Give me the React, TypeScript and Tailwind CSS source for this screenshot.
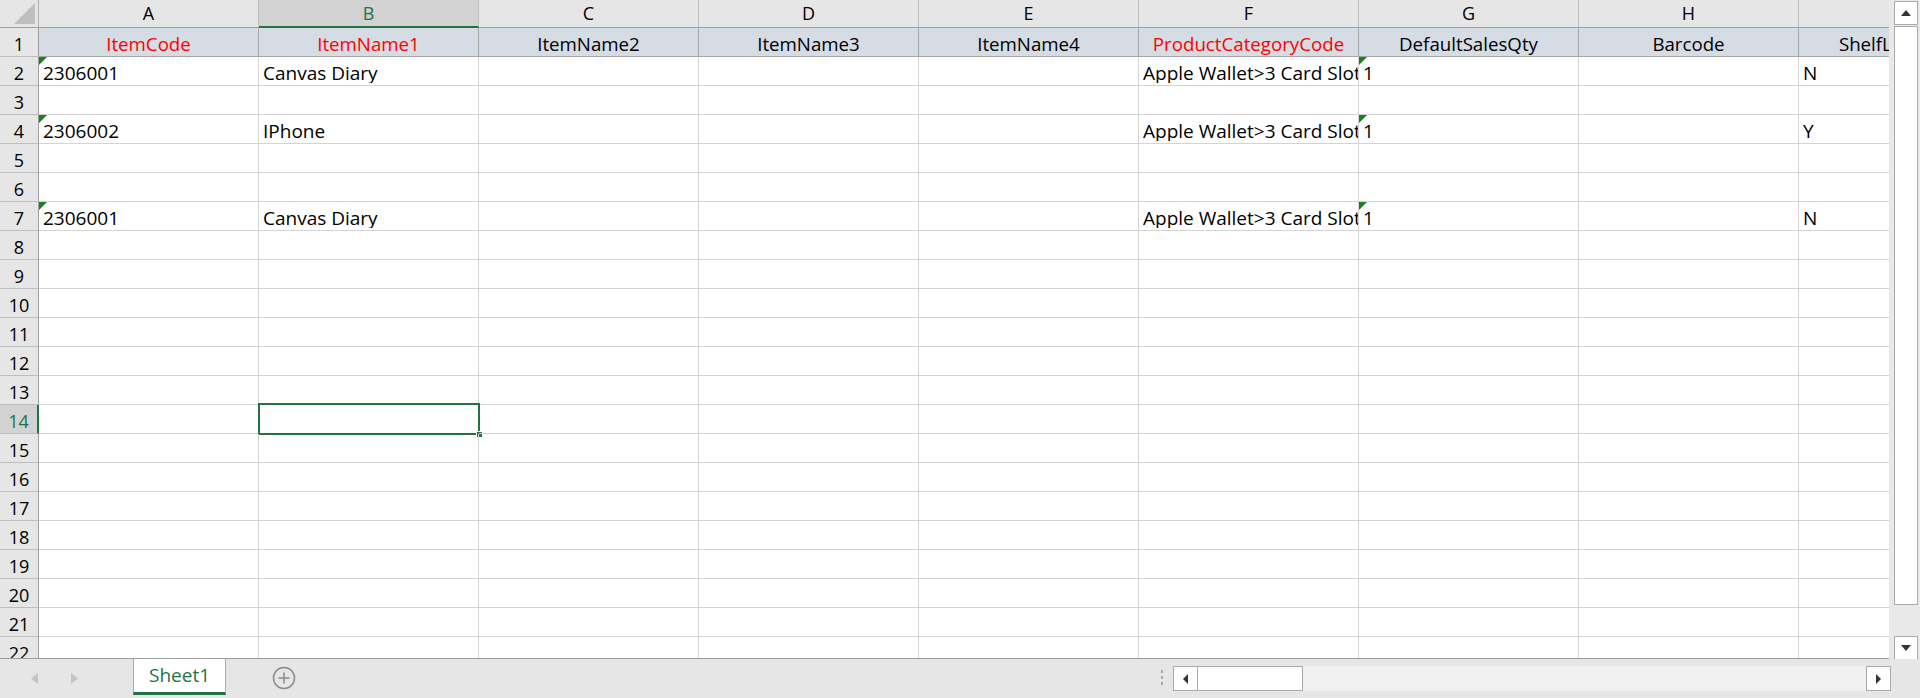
import React from "react";

const cols = ["A", "B", "C", "D", "E", "F", "G", "H", "I"];

const headers = [
  "ItemCode",
  "ItemName1",
  "ItemName2",
  "ItemName3",
  "ItemName4",
  "ProductCategoryCode",
  "DefaultSalesQty",
  "Barcode",
  "ShelfLifeControl",
];
const redHeaders = [0, 1, 5];

const row2 = ["2306001", "Canvas Diary", "", "", "", "Apple Wallet>3 Card Slots", "1", "", "N"];
const row4 = ["2306002", "IPhone", "", "", "", "Apple Wallet>3 Card Slots", "1", "", "Y"];

const data: Record<number, string[]> = { 2: row2, 4: row4, 7: row2 };
const flagged = [0, 6];

function Flag() {
  return (
    <svg className="absolute left-0 top-0" width="8" height="8" viewBox="0 0 8 8">
      <polygon points="0,0 8,0 0,8" fill="#1e7d1e" />
    </svg>
  );
}

function ColHeader({ label, active }: { label: string; active: boolean }) {
  return (
    <div
      className={
        active
          ? "h-[28px] flex items-center justify-center bg-[#d2d2d2] border-r border-[#bdbdbd] border-b-2 border-b-[#217346] text-[#217346] text-[18px]"
          : "h-[28px] flex items-center justify-center bg-[#e6e6e6] border-r border-[#bdbdbd] border-b border-b-[#9e9e9e] text-[18px] text-black"
      }
    >
      {label}
    </div>
  );
}

function RowHeader({ n }: { n: number }) {
  const active = n === 14;
  return (
    <div
      className={
        active
          ? "h-[29px] flex items-end justify-center pb-[2px] leading-[20px] bg-[#d2d2d2] border-r-2 border-r-[#217346] border-b border-b-[#bdbdbd] text-[#217346] text-[18px]"
          : "h-[29px] flex items-end justify-center pb-[2px] leading-[20px] bg-[#e6e6e6] border-r border-r-[#9e9e9e] border-b border-b-[#bdbdbd] text-black text-[18px]"
      }
    >
      {n}
    </div>
  );
}

export default function App() {
  const rows = Array.from({ length: 22 }, (_, i) => i + 1);

  return (
    <div className="w-[1920px] h-[698px] flex flex-col overflow-hidden bg-white font-['Open_Sans',sans-serif]">
      <div className="flex h-[659px]">
        {/* sheet grid */}
        <div className="w-[1889px] overflow-hidden border-b border-[#9e9e9e]">
          <div className="grid grid-cols-[39px_repeat(9,220px)] w-max">
            {/* corner */}
            <div className="h-[28px] bg-[#e6e6e6] border-r border-[#ababab] border-b border-b-[#9e9e9e] flex items-end justify-end pr-[3px] pb-[3px]">
              <svg width="21" height="21" viewBox="0 0 21 21">
                <polygon points="21,0 21,21 0,21" fill="#bfbfbf" />
              </svg>
            </div>
            {cols.map((c, i) => (
              <ColHeader key={c} label={c} active={i === 1} />
            ))}

            {rows.map((r) => (
              <React.Fragment key={r}>
                <RowHeader n={r} />
                {cols.map((c, ci) => {
                  if (r === 1) {
                    return (
                      <div
                        key={c}
                        className={
                          "h-[29px] flex items-end justify-center pb-[2px] leading-[20px] text-[18.7px] whitespace-nowrap overflow-hidden bg-[#d6dce4] border-r border-b border-[#a6a6a6] " +
                          (redHeaders.includes(ci) ? "text-[#ff0000]" : "text-black")
                        }
                      >
                        {headers[ci]}
                      </div>
                    );
                  }
                  const text = data[r]?.[ci] ?? "";
                  const hasFlag = !!data[r] && flagged.includes(ci);
                  const selected = r === 14 && ci === 1;
                  return (
                    <div
                      key={c}
                      className="relative h-[29px] flex items-end pl-[4px] pb-[2px] leading-[20px] text-[19px] text-black whitespace-nowrap border-r border-b border-[#d4d4d4]"
                    >
                      <span className="overflow-hidden block w-full">{text}</span>
                      {hasFlag && <Flag />}
                      {selected && (
                        <div className="absolute -left-[1px] -top-[2px] w-[222px] h-[32px] border-2 border-[#217346]">
                          <div className="absolute -right-[5px] -bottom-[5px] w-[7px] h-[7px] bg-[#217346] border border-white" />
                        </div>
                      )}
                    </div>
                  );
                })}
              </React.Fragment>
            ))}
          </div>
        </div>

        {/* vertical scrollbar */}
        <div className="w-[31px] bg-[#e9e9e9] flex flex-col items-center pt-[1px] pl-[2px]">
          <div className="w-[24px] h-[24px] bg-white border border-[#ababab] flex items-center justify-center">
            <svg width="10" height="6" viewBox="0 0 10 6">
              <polygon points="5,0 10,6 0,6" fill="#333" />
            </svg>
          </div>
          <div className="w-[24px] h-[579px] mt-[1px] bg-white border border-[#ababab]" />
          <div className="flex-1" />
          <div className="w-[24px] h-[24px] mb-[-1px] bg-white border border-[#ababab] flex items-center justify-center">
            <svg width="10" height="6" viewBox="0 0 10 6">
              <polygon points="0,0 10,0 5,6" fill="#333" />
            </svg>
          </div>
        </div>
      </div>

      {/* bottom bar */}
      <div className="flex-1 flex bg-[#e6e6e6]">
        <div className="w-[133px] flex items-center justify-start pl-[31px] gap-[33px] pb-[1px]">
          <svg width="7" height="11" viewBox="0 0 7 11">
            <polygon points="7,0 7,11 0,5.5" fill="#c3c3c3" />
          </svg>
          <svg width="7" height="11" viewBox="0 0 7 11">
            <polygon points="0,0 7,5.5 0,11" fill="#c3c3c3" />
          </svg>
        </div>
        <div className="w-[93px] h-[36px] bg-white border-x border-[#ababab] border-b-[3px] border-b-[#217346] flex items-center justify-center text-[19px] text-[#217346]">
          Sheet1
        </div>
        <div className="w-[115px] flex items-center justify-center pb-[1px] pl-[1px]">
          <svg width="24" height="24" viewBox="0 0 24 24">
            <circle cx="12" cy="12" r="10.5" fill="none" stroke="#8a8a8a" strokeWidth="1.5" />
            <path d="M12 6.5v11M6.5 12h11" stroke="#8a8a8a" strokeWidth="1.5" />
          </svg>
        </div>
        <div className="flex-1" />
        <div className="w-[22px] flex flex-col items-center justify-center gap-[3px] pb-[2px]">
          <div className="w-[2px] h-[3px] bg-[#a8a8a8]" />
          <div className="w-[2px] h-[3px] bg-[#a8a8a8]" />
          <div className="w-[2px] h-[3px] bg-[#a8a8a8]" />
        </div>
        <div className="w-[718px] h-[25px] mt-[7px] flex bg-[#f0f0f0]">
          <div className="w-[25px] h-full bg-white border border-[#ababab] flex items-center justify-center">
            <svg width="5" height="10" viewBox="0 0 5 10">
              <polygon points="5,0 5,10 0,5" fill="#333" />
            </svg>
          </div>
          <div className="w-[105px] h-full bg-white border border-[#ababab] border-l-0" />
          <div className="flex-1" />
          <div className="w-[25px] h-full bg-white border border-[#ababab] flex items-center justify-center">
            <svg width="5" height="10" viewBox="0 0 5 10">
              <polygon points="0,0 5,5 0,10" fill="#333" />
            </svg>
          </div>
        </div>
        <div className="w-[29px]" />
      </div>
    </div>
  );
}
